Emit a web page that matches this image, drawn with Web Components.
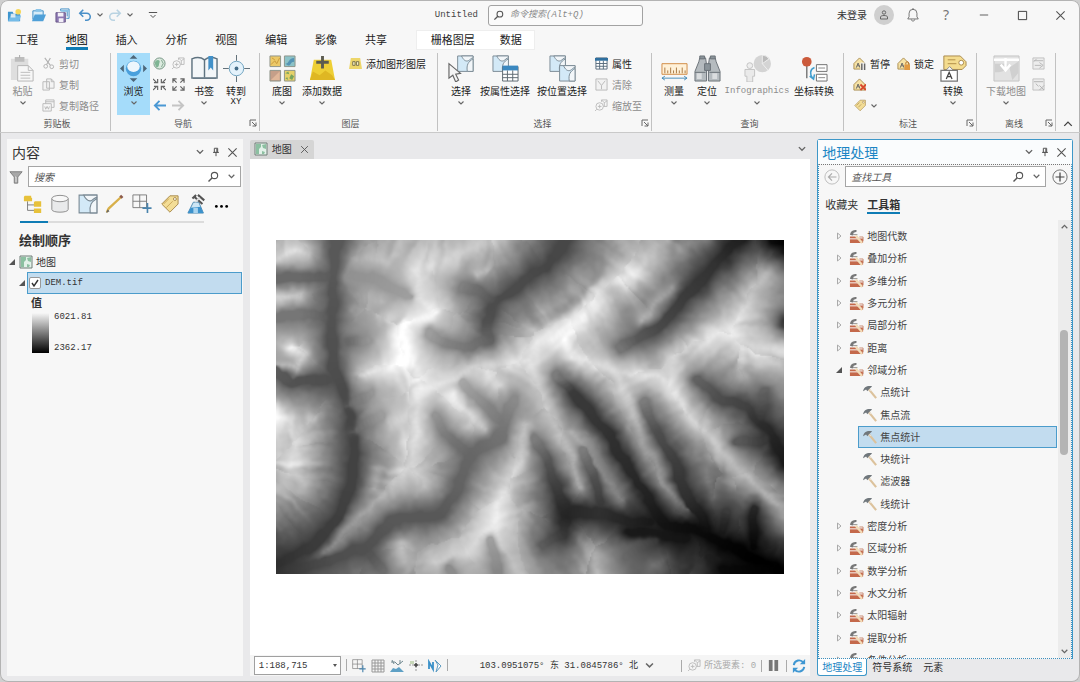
<!DOCTYPE html>
<html lang="zh-CN">
<head>
<meta charset="utf-8">
<title>Untitled</title>
<style>
html,body{margin:0;height:100%}
body{background:#cfcfcf;color:#333;font:10px/14px "Noto Sans CJK SC",sans-serif;--mono:"Liberation Mono","Noto Sans CJK SC",monospace;--blue:#0f7cb5;--line:#b4b4b4;overflow:hidden}
</style>
</head>
<body>
<gis-app></gis-app>
<script>
const RESET = `*{box-sizing:border-box}button,input,select{font:inherit;color:inherit;margin:0}button{background:none;border:0;padding:0;cursor:pointer}button:disabled{cursor:default}a{color:inherit;text-decoration:none}`;
function define(name, css, html, after) {
  customElements.define(name, class extends HTMLElement {
    constructor() { super(); this.attachShadow({mode: 'open'}); }
    connectedCallback() {
      const t = document.createElement('template');
      t.innerHTML = `<style>${RESET}${css}</style>` + (typeof html === 'function' ? html(this) : html);
      this.shadowRoot.replaceChildren(t.content.cloneNode(true));
      if (after) after(this);
    }
  });
}

/* ---------- icons: [viewBox size, markup] ---------- */
const tagShape = '<path d="M3 11 12 2h9v9l-9 9z" fill="#f3dd96" stroke="#a38546"/><circle cx="17.5" cy="5.5" r="1.6" fill="#fff" stroke="#a38546"/>';
const labelTag = '<path d="M1 13V7l6-6 6 6v6z" fill="#f6e2a5" stroke="#a98b4d"/><path d="m3.500 11.500 2-5 2 5M4.500 9.500h2.500" fill="none" stroke="#666"/>';
const carto = '<path d="M1 1h16v16H1z" fill="#d3e9f7" stroke="#7b8a95"/><path d="M5 1c2 4 4 6 7 5 2-1 3-3 5-3V1z" fill="#f2f6f9" stroke="#7b8a95"/><path d="M17 4c-5 3-7 6-6 13h6z" fill="#f2f6f9" stroke="#7b8a95"/>';
const ICONS = {
  project:[16,'<path d="M1 4h5l1 2h7v8H1z" fill="#3d95cf"/><path d="m1 14 3-6h11l-2 6z" fill="#75bce8"/><circle cx="12" cy="4" r="3" fill="#f5d75c"/><path d="M4 6h5v4H4z" fill="#f7f7f7" opacity=".8"/>'],
  open:[16,'<path d="M2 3h11v9H2z" fill="#d8ecf8" stroke="#3b8cc4"/><path d="M5 1h6v3H5z" fill="#8ac4e8"/><path d="m1 14 3-7h12l-3 7z" fill="#4fa0d8"/>'],
  save:[16,'<path d="M1 5h10v10H1z" fill="#8d79b3" stroke="#695587"/><path d="M3 5h6v4H3zM4 11h5v4H4z" fill="#f2eff7"/><path d="M6 3V1h9v10h-3M8 3h5v6" fill="none" stroke="#3b8cc4"/><path d="M6 2h9v2H6z" fill="#8ac4e8"/>'],
  undo:[16,'<path d="M6 2 2 6l4 4M2 6h8a4 4 0 0 1 0 8H8" fill="none" stroke="#4a90c8" stroke-width="1.8"/>'],
  redo:[16,'<path d="m10 2 4 4-4 4m4-4H6a4 4 0 0 0 0 8h2" fill="none" stroke="#b9d3e2" stroke-width="1.8"/>'],
  caret:[8,'<path d="m1.500 2.500 2.500 2.500 2.500-2.500" fill="none" stroke="#666" stroke-width="1.100"/>'],
  menu:[12,'<path d="M1 3h10M3 6l3 3 3-3" fill="none" stroke="#555" stroke-width="1.200"/>'],
  search:[16,'<circle cx="10" cy="6" r="4.200" fill="none" stroke="currentColor" stroke-width="1.500"/><path d="m7 9-5 5" stroke="currentColor" stroke-width="2"/>'],
  user:[12,'<circle cx="6" cy="3.500" r="1.700" fill="none" stroke="#666"/><path d="M2.500 10V8c0-2 7-2 7 0v2z" fill="none" stroke="#666"/>'],
  bell:[16,'<path d="M2 12.500h12L12.500 10V6a4.500 4.500 0 0 0-9 0v4zM6 13c0 2.500 4 2.500 4 0M8 0v2" fill="none" stroke="#666"/>'],
  min:[12,'<path d="M1 6h10" stroke="#444"/>'], max:[12,'<path d="M1.500 1.500h9v9h-9z" fill="none" stroke="#333"/>'],
  close:[12,'<path d="m1.500 1.500 9 9m0-9-9 9" stroke="#555" stroke-width="1.200"/>'],
  pin:[12,'<path d="M4 1.500h4v5H4zM7 2v4M2.500 6.500h7M6 7v4" fill="none" stroke="#555" stroke-width="1.200"/>'],
  paste:[28,'<path d="M2 4h18v22H2z" fill="#dedede"/><path d="M6 2h10v5H6z" fill="#bdbdbd"/><path d="M11 0v3" stroke="#aaa"/><path d="M9 11h11l5 5v11H9z" fill="#f7f7f7" stroke="#b5b5b5"/><path d="M20 11v5h5M12 18h10M12 21h10M12 24h10" fill="none" stroke="#bbb"/>'],
  cut:[14,'<path d="M3 1 9 9M9 1 5 8" stroke="#b0b0b0" stroke-width="1.200"/><circle cx="4" cy="10" r="2" fill="none" stroke="#b0b0b0"/><circle cx="10.500" cy="10.500" r="2" fill="none" stroke="#b0b0b0"/>'],
  copy:[14,'<path d="M1 4h7v9H1zM5 1h5l3 3v7H5z" fill="#f3f3f3" stroke="#b8b8b8"/><path d="M10 1v3h3" fill="none" stroke="#b8b8b8"/>'],
  path:[14,'<path d="M1 5h9v8H1zM4 5V1h9v8h-3M4 3h9" fill="none" stroke="#b8b8b8"/><path d="m3 8 1 3 1.500-3L7 11l1-3" fill="none" stroke="#b8b8b8"/>'],
  browse:[28,'<path d="m14 0 4 4h-8zM14 28l4-4h-8zM0 14l4-4v8zM28 14l-4-4v8z" fill="#4d6678"/><circle cx="14" cy="14" r="8" fill="#4aa0dc"/><ellipse cx="14" cy="12" rx="6.500" ry="5.500" fill="#eef6fc"/>'],
  globe:[14,'<circle cx="7" cy="7" r="6" fill="#dcebe0" stroke="#6d8f7c"/><path d="M3 4c3-2 5 0 4 2s0 4-2 5-4-5-2-7z" fill="#7fb594"/><path d="m9 3 2 4-2 4" fill="none" stroke="#7fa48c"/>'],
  zoomsel:[14,'<circle cx="5" cy="8" r="4" fill="none" stroke="#bbb"/><path d="M3 8h4M5 6v4M2 11l-2 2M7 3V1h6v7H9M7 1l3 3 3-2M10 4v4" fill="none" stroke="#bbb"/>'],
  shrink:[14,'<g fill="none" stroke="#666" stroke-width="1.300"><path d="m0 1 4 4M1 5h4V1M14 1l-4 4M9 1v4h4M0 13l4-4M1 9h4v4M14 13l-4-4M9 13V9h4"/></g>'],
  grow:[14,'<g fill="none" stroke="#666" stroke-width="1.300"><path d="m1 1 4 4M1 5V1h4M13 1 9 5M9 1h4v4M1 13l4-4M1 9v4h4M13 13 9 9M9 13h4V9"/></g>'],
  back:[14,'<path d="M7 2 2 7l5 5M2 7h12" fill="none" stroke="#4a98d4" stroke-width="2"/>'],
  fwd:[14,'<path d="m7 2 5 5-5 5m5-5H0" fill="none" stroke="#c4c4c4" stroke-width="2"/>'],
  book:[28,'<path d="M1 4c5-2 9-2 13 1 4-3 8-3 13-1v20H1z" fill="#f3f6f8" stroke="#5f7380" stroke-width="1.500"/><path d="M14 5v18M2 24h24" stroke="#5f7380" stroke-width="1.500"/><path d="M18 1h5v15l-2.500-3L18 16z" fill="#4291c9"/>'],
  goto:[28,'<circle cx="14" cy="14" r="7.500" fill="#e4f2fb" stroke="#6ea2bf"/><path d="M14 0v6M14 22v6M0 14h6M22 14h6" stroke="#5d6c76"/><circle cx="14" cy="14" r="2" fill="#456d88"/>'],
  basemap:[28,'<g stroke="#8e9489"><path d="M1 1h11v11H1z" fill="#ecc968"/><path d="M16 1h11v11H16z" fill="#8cc3c8"/><path d="M1 16h11v11H1z" fill="#c59f89"/><path d="M16 16h11v11H16z" fill="#e6d169"/></g><path d="m2 10 4-4 2 3 3-6M3 3l3 2" stroke="#c99a3a" fill="none"/><path d="M17 9c4 0 3-6 9-6v4c-4 0-3 4-6 4z" fill="#5594b5"/><path d="M2 26 11 17v9z" fill="#e0b79a"/><path d="m17 19 3-2 1 3zM23 20l3 2-2 4-3-2zM17 24l2-1 1 3z" fill="#79a55c"/>'],
  adddata:[28,'<path d="M5 5h18l4 21H1z" fill="#eecf35"/><path d="m1 26 3-9 7 4 6-5 7 5 3 5z" fill="#dfb723"/><path d="M14 1v13M7.500 7.500h13" stroke="#5c5c50" stroke-width="3"/>'],
  graphics:[14,'<path d="M2 1h10l2 12H0z" fill="#edd66a"/><path d="M4 5h2.500v4H4zM8 5h2.500v4H8z" fill="#f7f0c5" stroke="#776f4c"/>'],
  select:[28,`<g transform="translate(9)">${carto}</g><path d="M1 9v15l4-3 3 7 3-2-3-6 5-1z" fill="#f4f4f4" stroke="#666" stroke-width="1.200"/>`],
  selattr:[28,`<g>${carto}</g><path d="M11 12h16v15H11z" fill="#fff" stroke="#5d6870"/><path d="M11 11h16v5H11z" fill="#3b88c0"/><path d="M11 20h16M11 23.500h16M16 16v11M21.500 16v11" stroke="#5d6870"/>`],
  selloc:[28,`${carto}<g transform="translate(10 10)">${carto}</g>`],
  table:[14,'<path d="M1 1h12v12H1z" fill="#fff" stroke="#55697a"/><path d="M0 1h14v3H0z" fill="#2f6f9f"/><path d="M1 7h12M1 10h12M5 4v9M9 4v9" stroke="#55697a"/>'],
  clear:[14,'<path d="M1 1h12v12H1z" fill="#f2f2f2" stroke="#b8b8b8"/><path d="m3 3 4 5 4-5M7 8v4" fill="none" stroke="#b8b8b8"/>'],
  ruler:[28,'<path d="M1 9h26v11H1z" fill="#fff1d8" stroke="#d08a45"/><path d="M4 19v-6M7 19v-3M10 19v-6M13 19v-3M16 19v-6M19 19v-3M22 19v-6M25 19v-3" stroke="#a97842"/><path d="M1 24h26M4 22l-3 2 3 2M24 22l3 2-3 2" fill="none" stroke="#468bb8"/>'],
  binoc:[28,'<path d="M6 3h6l1 7v17H1V17L5 7zM16 3h6l1 4 4 10v10H15V10z" fill="#b5bbbf" stroke="#6a7178"/><path d="M6 1h5v3H6zM17 1h5v3h-5zM1 18h11M16 18h11M11 9h6v7h-6z" fill="#8a9399" stroke="#6a7178"/><path d="M3 19h5v6H3zM19 19h5v6h-5z" fill="#dadddf"/>'],
  info:[28,'<circle cx="19" cy="9" r="9" fill="#d4d4d4"/><path d="M19 9V0a9 9 0 0 1 7 4zM19 9l6 7" fill="#bbb" stroke="#eee"/><circle cx="6" cy="11" r="3" fill="#eee" stroke="#c3c3c3"/><path d="M1 15h10v7H9v6H3v-6H1z" fill="#eaeaea" stroke="#c3c3c3"/>'],
  coord:[28,'<path d="M6 10v14" stroke="#777" stroke-width="1.500"/><circle cx="6" cy="7" r="5" fill="#cb5a3b"/><path d="M16 10h11v7H16zM16 20h11v7H16z" fill="#fff" stroke="#707070"/><path d="M18 13.500h7M18 23.500h7" stroke="#888"/><path d="M14 13c-5 2-5 7-2 11m-3-2 4 3 1-5" fill="none" stroke="#409dce" stroke-width="1.600"/>'],
  pause:[14,labelTag+'<path d="M8 6h6v8H8z" fill="#f7f7f7"/><path d="M9.500 7v7M12.500 7v7" stroke="#666" stroke-width="1.600"/>'],
  lock:[14,labelTag+'<path d="M8 8h6v6H8z" fill="#e29a42"/><path d="M9.500 8V6.500c0-2 3-2 3 0V8" fill="none" stroke="#b5702a"/>'],
  unplaced:[14,labelTag+'<path d="m8 7 6 6m0-6-6 6" stroke="#d9482d" stroke-width="2"/>'],
  tagsm:[22,tagShape+'<path d="m6 11 5-5M9 14l5-5" stroke="#a38546"/>'],
  convert:[28,'<path d="M4 1h17l6 6v4l-4 4H4z" fill="#f4dc8f" stroke="#a8884c"/><circle cx="22" cy="8" r="2.500" fill="#fff" stroke="#a8884c"/><path d="M8 5h8M8 9h9" stroke="#b18e47"/><path d="m6 16 4-4 4 4" fill="#fff" stroke="#888"/><path d="M1 16h17v11H1z" fill="#fff" stroke="#777" stroke-width="1.300"/><path d="m6.500 25 3-7 3 7m-5-2.500h4" fill="none" stroke="#444" stroke-width="1.300"/>'],
  download:[28,'<path d="M1 1h26v26H1z" fill="#e2e2e2" stroke="#c4c4c4"/><path d="M2 9h13c0 7-5 9-13 9M17 13l9-6v12l-6 7" fill="#d0d0d0"/><path d="M1 5h26M13 3v12m-5-5 5 6 5-6" fill="none" stroke="#fff" stroke-width="2.500"/>'],
  sync:[14,'<path d="M1 1h12v12H1z" fill="#ededed" stroke="#c0c0c0"/><path d="M2 4h10M3 9h7M8 6l4 3-4 3M5 2 2 5" fill="none" stroke="#b5b5b5"/>'],
  remove:[14,'<path d="M1 1h12v12H1z" fill="#ededed" stroke="#c0c0c0"/><path d="M2 4h10M4 6l3 3M8 8l5 5m0-5-5 5" fill="none" stroke="#b0b0b0"/>'],
  launch:[8,'<path d="M1 7V1h6M3 3l4 4M7 3.500V7H3.500" fill="none" stroke="#666"/>'],
  collapse:[8,'<path d="m1 5.500 3-3 3 3" fill="none" stroke="#444" stroke-width="1.100"/>'],
  filter:[16,'<path d="M1 2h14L10 8v7H6V8z" fill="#a8a8a8" stroke="#777"/><path d="M7 8h1v6" stroke="#eee" fill="none"/>'],
  drawing:[22,'<path d="M5 8v10h9M5 12h9" fill="none" stroke="#777"/><path d="M2 2h7v2h1v4H1V3zM13 8h7v6h-8V9zM13 16h7v5h-8v-5z" fill="#e7c13a"/>'],
  cylinder:[22,'<path d="M2 5v12c0 4 18 4 18 0V5" fill="#e9eaeb" stroke="#888"/><ellipse cx="11" cy="5" rx="9" ry="3.500" fill="#f8f8f8" stroke="#888"/>'],
  carto:[18,carto],
  pencil:[22,'<path d="m2 20 2-4L18 3" stroke="#d8b04a" stroke-width="2.500" fill="none"/><path d="m17 4 2-2" stroke="#8c5a4b" stroke-width="3.500"/><path d="m1 21 2-4 2 2z" fill="#666"/>'],
  snap:[22,'<path d="M1 1h15v14H1zM8.500 1v14M1 8h15" fill="none" stroke="#777"/><path d="M17 10v11M11.500 15.500h10" stroke="#4a84ad" stroke-width="1.800"/>'],
  tag:[22,tagShape+'<path d="m5 11 6-6M8 15l7-7" stroke="#c7a051"/>'],
  flask:[22,'<path d="M7 9h6l5 12H1z" fill="#cde6f5" stroke="#4886ad"/><path d="m4 15 11-1 3 7H1z" fill="#3c92cc"/><path d="M7 15h5v6H7z" fill="#a9d3ee"/><path d="m8 3 9 8M12 1l7 6M6 5l4-4" stroke="#555" stroke-width="2.300"/><path d="m9 9 5-5" stroke="#ddd" stroke-width="2"/>'],
  more:[16,'<circle cx="2.500" cy="10" r="1.500"/><circle cx="8" cy="10" r="1.500"/><circle cx="13.500" cy="10" r="1.500"/>'],
  map:[14,'<path d="M1 1h12v12H1z" fill="#e3f1e9" stroke="#6f7d77"/><path d="M2 2h5v3L5 7v5H2zM8 3l4-1v5l-3-1zM8 9l3 1-1 2H8z" fill="#8cc0a1"/>'],
  expanded:[8,'<path d="M7 1v6H1z" fill="#555"/>'],
  collapsed:[8,'<path d="m2.500 1 3.500 3-3.500 3z" fill="none" stroke="#aaa"/>'],
  toolbox:[16,'<path d="M1 6c1-4 3-5 7-5v2L5 4 4 7z" fill="#777"/><path d="M4 6h5" stroke="#8c8c8c"/><path d="M1 8h8l1 2h5v5H1z" fill="#c4694b"/><path d="M1 10.500h9" stroke="#fff"/><path d="m7 7 7 8" stroke="#f2dcb9" stroke-width="2.500"/><path d="M11 8.500h4V13" fill="none" stroke="#c98a72"/>'],
  hammer:[16,'<path d="m6 4 9 11" stroke="#dcc29c" stroke-width="2.400"/><path d="m7 5 2 2" stroke="#eee"/><path d="M0 7c1-4 3-6 8-6h2v1L6.500 5 5 7 3.500 5z" fill="#70777c"/>'],
  circback:[18,'<circle cx="9" cy="9" r="8" fill="none" stroke="#b8b8b8"/><path d="M9 5 5 9l4 4M5 9h9" fill="none" stroke="#aaa" stroke-width="1.300"/>'],
  circplus:[18,'<circle cx="9" cy="9" r="8" fill="none" stroke="#666"/><path d="M9 4v10M4 9h10" stroke="#444" stroke-width="1.400"/>'],
  grid:[14,'<path d="M1 1h12v12H1zM4 1v12M7 1v12M10 1v12M1 4h12M1 7h12M1 10h12" fill="none" stroke="#999"/>'],
  ground:[14,'<path d="M1 3h4l3 3 5-4M2 1l2 4M10 1v4" fill="none" stroke="#708890"/><path d="m0 13 3-4 3 1 3-2 5 5z" fill="#5ea0c5"/>'],
  guide:[14,'<path d="M0 6h14M7 1v12" stroke="#999" stroke-dasharray="2 1"/><path d="M5 6h4M7 4v4" stroke="#444" stroke-width="1.400"/><path d="M1 2h4v3H1z" fill="#c8d8b9"/>'],
  north:[14,'<path d="M1 10V3l4 7V3" fill="none" stroke="#3a91c9" stroke-width="1.800"/><path d="m7 1 3 5-2 7 5-6z" fill="#fff" stroke="#5c9bc1"/>'],
  pausebars:[14,'<path d="M2 1h4v12H2zM8 1h4v12H8z" fill="#777"/>'],
  refresh:[16,'<path d="M2 7c1-6 8-7 11-3M14 9c-1 6-8 7-11 3" fill="none" stroke="#3f97d2" stroke-width="2.200"/><path d="M15 0v6H9zM1 16v-6h6z" fill="#3f97d2"/>']
};
define('ui-icon', ':host{display:inline-flex;flex:none}svg{display:block}', el => {
  const [box, body] = ICONS[el.getAttribute('name')], s = el.getAttribute('size') || box;
  return `<svg width="${s}" height="${s}" viewBox="0 0 ${box} ${box}" aria-hidden="true">${body}</svg>`;
});
const icon = (n, s = '') => `<ui-icon name="${n}" size="${s}"></ui-icon>`;
const ibtn = (n, label, s = '') => `<button aria-label="${label}">${icon(n, s)}</button>`;

/* ---------- title bar ---------- */
define('title-bar', `
:host{display:grid;grid-template-columns:488fr 155fr 437fr;height:30px;align-items:center}
.left,.right,.wins{display:flex;align-items:center}
button{display:flex;align-items:center;justify-content:center}
.left{padding:0 10px 0 7px}.left .files{display:flex;gap:9px;margin-right:8px}.left .hist{display:flex;gap:4px;align-items:center}
.left .qa{margin-left:14px}
h1{font:9px/14px var(--mono);margin:0 0 0 auto;color:#444}
label{display:flex;align-items:center;gap:6px;border:1px solid #a2a2a2;border-radius:3px;height:21px;padding:0 4px;background:#fafafa;color:#555}
input{border:0;background:none;outline:0;min-width:0;flex:1;font:italic 9px/14px var(--mono);padding:0}
input::placeholder{color:#888}
.right{justify-content:flex-end;padding-right:1px;color:#333}
.avatar{width:20px;height:20px;border-radius:50%;background:#cfcfcf;margin:0 12px 0 7px}
.help{font:14px/16px "Noto Sans",sans-serif;color:#777;width:22px;margin:0 8px 0 15px}.wins button{width:38px;height:28px}`,
`<div class="left"><div class="files">${ibtn('project','新建工程',15)}${ibtn('open','打开',15)}${ibtn('save','保存',15)}</div>
<div class="hist">${ibtn('undo','撤消',14)}${ibtn('caret','撤消列表',8)}${ibtn('redo','恢复',14)}${ibtn('caret','恢复列表',8)}</div>
<div class="hist qa">${ibtn('menu','自定义',10)}</div><h1>Untitled</h1></div>
<label>${icon('search',11)}<input aria-label="命令搜索" placeholder="命令搜索(Alt+Q)"></label>
<div class="right"><a href="#signin">未登录</a><button class="avatar" aria-label="账户">${icon('user')}</button>${ibtn('bell','通知',14)}<button class="help">?</button>
<div class="wins">${ibtn('min','最小化',10)}${ibtn('max','最大化',11)}${ibtn('close','关闭',11)}</div></div>`);

/* ---------- ribbon tabs ---------- */
define('ribbon-tabs', `
:host{display:flex;height:20px;padding-left:2px;font-size:11px;line-height:16px;color:#222}
nav{display:grid;grid-template-columns:repeat(8,1fr);width:37%}
nav a{justify-self:center;display:flex;align-items:center;height:20px;border-bottom:3px solid transparent;border-top:1px solid transparent;white-space:nowrap}
nav a[aria-current]{border-bottom-color:var(--blue);color:#000}
.ctx{display:flex;justify-content:space-between;align-items:center;width:119px;margin-left:15px;padding:0 12px 2px 14px;background:#fff;border:1px solid #eee}`,
`<nav>${['工程','地图','插入','分析','视图','编辑','影像','共享'].map((t,i)=>`<a href="#t${i}"${i===1?' aria-current="page"':''}>${t}</a>`).join('')}</nav>
<div class="ctx"><a href="#raster">栅格图层</a><a href="#data">数据</a></div>`);

/* ---------- ribbon pieces ---------- */
define('big-tool', `
:host{display:block;flex:none;height:62px}
button{width:100%;height:100%;display:flex;flex-direction:column;align-items:center;padding-top:2px;white-space:nowrap;color:#222}
:host([active]) button{background:#a5dcfa}button:disabled{color:#8d8d8d}
.l{line-height:14px;margin-top:2px}.mono{font:9px/14px var(--mono)}.sub{font:9px/9px var(--mono)}
ui-icon.c{margin-top:1px}`,
el => { const g = a => el.getAttribute(a); return `<button${g('off')!==null?' disabled':''}>${icon(g('icon'),27)}<span class="l${g('mono')!==null?' mono':''}">${g('label')}</span>${g('sub')?`<span class="sub">${g('sub')}</span>`:''}${g('nocaret')===null?'<ui-icon class="c" name="caret" size="8"></ui-icon>':''}</button>`; });
define('small-tool', `
:host{display:block;height:21px}
button{display:flex;align-items:center;gap:4px;height:100%;white-space:nowrap;color:#222}button:disabled{color:#8d8d8d}`,
el => { const g = a => el.getAttribute(a); return `<button aria-label="${g('label')||g('hint')}"${g('off')!==null?' disabled':''}>${icon(g('icon'),13)}${g('label')?`<span>${g('label')}</span>`:''}${g('drop')!==null?icon('caret',8):''}</button>`; });
define('ribbon-group', `
:host{display:flex;flex-direction:column;min-width:0;border-right:1px solid #c2c2c2;padding-left:6px}
.tools{display:flex;height:64px}
footer{display:grid;grid-template-columns:1fr auto;align-items:center;text-align:center;line-height:14px;font-size:9px;color:#555;padding-right:2px}`,
el => `<div class="tools"><slot></slot></div><footer><span>${el.getAttribute('caption')}</span>${el.hasAttribute('launcher')?ibtn('launch','更多选项',8):''}</footer>`);

const big = (i,l,w,x='') => `<big-tool icon="${i}" label="${l}" style="width:${w}px" ${x}></big-tool>`;
const sm = (i,l,x='') => `<small-tool icon="${i}" label="${l}" ${x}></small-tool>`;
define('app-ribbon', `
:host{display:grid;grid-template-columns:111fr 149fr 178fr 214fr 192fr 133fr 79fr 24fr;padding:3px 0;height:83px;border-bottom:1px solid #c9c9c9}
.col{display:flex;flex-direction:column;padding-left:3px}.row{display:flex;gap:7px}
.mini{display:grid;grid-template-columns:19px 19px;justify-items:center;align-content:start;flex:none}
.fold{align-self:end;justify-self:center;display:flex;padding-bottom:2px}`,
`<ribbon-group caption="剪贴板">${big('paste','粘贴',33,'off')}<div class="col">${sm('cut','剪切','off')}${sm('copy','复制','off')}${sm('path','复制路径','off')}</div></ribbon-group>
<ribbon-group caption="导航" launcher>${big('browse','浏览',33,'active')}<div class="mini">${[['globe','全图'],['zoomsel','缩放至所选'],['shrink','固定比例放大'],['grow','固定比例缩小'],['back','上一视图'],['fwd','下一视图']].map(a=>`<small-tool icon="${a[0]}" hint="${a[1]}"></small-tool>`).join('')}</div>${big('book','书签',32)}${big('goto','转到',32,'sub="XY" nocaret')}</ribbon-group>
<ribbon-group caption="图层">${big('basemap','底图',32)}${big('adddata','添加数据',48)}<div class="col">${sm('graphics','添加图形图层')}</div></ribbon-group>
<ribbon-group caption="选择" launcher>${big('select','选择',34)}${big('selattr','按属性选择',54,'nocaret')}${big('selloc','按位置选择',60,'nocaret')}<div class="col">${sm('table','属性')}${sm('clear','清除','off')}${sm('zoomsel','缩放至','off')}</div></ribbon-group>
<ribbon-group caption="查询">${big('ruler','测量',32)}${big('binoc','定位',34)}${big('info','Infographics',66,'off mono')}${big('coord','坐标转换',48,'nocaret')}</ribbon-group>
<ribbon-group caption="标注" launcher><div class="col"><div class="row">${sm('pause','暂停')}${sm('lock','锁定')}</div><small-tool icon="unplaced" hint="查看未放置的标注"></small-tool><small-tool icon="tagsm" hint="更多标注" drop></small-tool></div>${big('convert','转换',38)}</ribbon-group>
<ribbon-group caption="离线" launcher>${big('download','下载地图',46,'off')}<div class="col"><small-tool icon="sync" hint="同步" off></small-tool><small-tool icon="remove" hint="移除" off></small-tool></div></ribbon-group>
<button class="fold" aria-label="折叠功能区">${icon('collapse',10)}</button>`);

/* ---------- panels ---------- */
define('panel-header', `
:host{display:flex;align-items:center;height:26px;padding:0 5px;font-size:14px;line-height:20px}
h2{font:inherit;margin:0;flex:1}div{display:flex;align-items:center;gap:6px;color:#444}button{display:flex}`,
`<h2><slot></slot></h2><div>${ibtn('caret','菜单',10)}${ibtn('pin','自动隐藏',10)}${ibtn('close','关闭',11)}</div>`);
define('search-box', `
:host{display:block;flex:1;min-width:0}
label{display:flex;align-items:center;gap:8px;height:21px;border:1px solid #a5a5a5;background:#fff;padding:0 4px 0 5px;color:#555}
input{flex:1;min-width:0;border:0;outline:0;background:none;font-style:italic;padding:0}input::placeholder{color:#555}button{display:flex}`,
el => `<label><input aria-label="${el.getAttribute('hint')}" placeholder="${el.getAttribute('hint')}">${icon('search',12)}${ibtn('caret','搜索选项',9)}</label>`);

define('contents-panel', `
:host{display:flex;flex-direction:column;background:#f7f7f7;min-width:0}
button{display:flex}
.find{display:flex;align-items:center;gap:5px;padding:1px 2px 0}
.views{display:flex;justify-content:space-between;padding:0 14px 0 16px;height:34px;align-items:center}
.rule{height:2px;margin:0 39px 0 13px;background:linear-gradient(90deg,var(--blue) 28px,#dcdcdc 28px)}
h3{font-size:13px;line-height:18px;margin:8px 12px 3px;color:#333}
.row{display:flex;align-items:center;gap:3px}.map{padding-left:1px;height:20px}
.layer{padding-left:11px;height:22px;gap:0}
.layer label{flex:1;display:flex;align-items:center;gap:4px;height:22px;margin-right:1px;margin-left:1px;padding-left:1px;border:1px solid #4b9ccb;background:#c2dcef;font:9px/14px var(--mono)}
input{appearance:none;width:12px;height:12px;border:1px solid #999;border-radius:2px;background:#fff url("data:image/svg+xml,%3Csvg xmlns='http://www.w3.org/2000/svg' viewBox='0 0 10 10'%3E%3Cpath d='m2 5 2 3 4-6' fill='none' stroke='%23333' stroke-width='1.400'/%3E%3C/svg%3E")}
h4{font-size:11px;line-height:16px;margin:0 24px 3px}
.legend{display:flex;gap:5px;padding-left:25px;height:40px}
.ramp{width:17px;background:linear-gradient(#f7f7f7,#000)}
.vals{display:flex;flex-direction:column;justify-content:space-between;font:9px/10px var(--mono)}.vals span:first-child{margin-top:-1px}`,
`<panel-header>内容</panel-header><div class="find">${icon('filter',14)}<search-box hint="搜索"></search-box></div>
<div class="views">${[['drawing','按绘制顺序列出'],['cylinder','按数据源列出'],['carto','按选择列出'],['pencil','按编辑列出'],['snap','按捕捉列出'],['tag','按标注列出'],['flask','按图表列出']].map(a=>ibtn(a[0],a[1],20)).join('')}${ibtn('more','更多',15)}</div><div class="rule"></div>
<h3>绘制顺序</h3><div class="row map">${icon('expanded',8)}${icon('map',14)}<span>地图</span></div>
<div class="row layer">${icon('expanded',8)}<label><input type="checkbox" checked>DEM.tif</label></div>
<h4>值</h4><div class="legend"><div class="ramp"></div><div class="vals"><span>6021.81</span><span>2362.17</span></div></div>`);

/* ---------- elevation raster: valleys and ridges as [x, y, grey], in a 1527 x 1005 space ---------- */
const VALLEYS = [
 [185,-30,88,170,85,88,165,235,82,170,385,78,210,485,72,230,605,66,222,745,66,175,845,62,95,925,58,-15,985,45],
 [-5,1000,50,165,960,78,275,925,80,345,845,88,485,825,88,545,745,98,585,645,102,675,585,115,688,525,125,725,465,142],
 [585,645,102,505,575,125,465,515,155],[675,545,118,605,475,145,545,415,172],
 [885,-20,72,815,75,70,725,135,75,650,190,75,635,245,80,635,295,98,585,320,115,505,305,132,445,275,165],
 [650,180,85,595,145,110,545,135,135],
 [1405,-20,28,1315,75,50,1225,175,60,1155,255,72,1085,295,88,1020,332,125],
 [840,405,125,885,455,58,945,525,55,1005,595,48,1065,695,42,1125,795,32,1165,855,18,1275,875,10,1365,925,4,1435,955,0,1535,1010,0],
 [1105,485,125,1145,575,78,1195,665,62,1235,765,48,1275,835,26,1285,875,8],
 [1270,420,98,1335,480,76,1415,495,65,1455,545,45,1495,605,35,1540,685,22],
 [775,595,125,815,665,85,845,745,62,865,815,38,965,820,48,1045,840,38,1135,845,22],
 [915,630,125,955,705,85,975,805,55],[870,825,35,862,880,55,785,925,100],
 [-20,385,95,45,425,82,165,420,78],[-20,115,105,75,110,105,165,105,90],[-20,230,118,75,222,118,160,235,90],
 [225,105,145,295,115,150,415,175,160],[285,945,85,335,1000,115],[1490,-10,12,1540,5,0,1540,50,35],
 [1535,240,55,1535,270,70],[1465,455,100,1455,540,50],[1135,905,60,1040,960,110],[1435,800,40,1435,930,0],[1340,990,10,1510,985,0],
 [1390,600,90,1480,600,50],[1350,820,60,1340,890,15],[520,985,140,540,1010,140],[640,900,160,670,1010,130],[1060,875,25,1240,900,20],[210,310,105,290,300,160],[210,490,100,300,455,160],[225,570,100,330,520,165]];
const RIDGES = [
 [-20,60,215,60,35,235,110,50,195],[-20,172,230,85,170,205],[40,320,250,75,345,220,60,385,200,-20,370,210],
 [-20,525,250,30,545,240,50,590,220,50,675,222,85,740,190],[50,585,220,120,520,190],[50,675,220,20,740,190],
 [690,-20,190,600,10,210,530,50,215,415,90,228,435,175,232,478,220,255,385,250,255,390,310,265,390,355,265,335,385,245,250,410,225],
 [400,340,255,425,385,255,435,445,240,525,415,228,590,385,215,765,358,235,790,312,238,855,280,260,925,225,248,985,140,215,1065,105,240,1125,45,200,1170,-20,165],
 [435,445,240,415,515,228,330,560,200],[415,515,228,418,575,240,405,665,222,445,755,200],[405,665,222,335,755,190,265,815,168,185,895,155,130,945,140],
 [765,358,235,785,445,210,835,555,200,885,645,190,915,755,175],
 [865,295,250,885,345,240,1015,395,226,1065,495,205,1115,635,165,1175,745,155,1245,815,115],
 [1015,395,222,1175,415,232,1225,505,228,1325,615,205,1405,705,195,1540,825,175],
 [1175,415,230,1205,335,215,1365,265,238,1395,315,225,1540,335,240],[1365,265,238,1425,175,212,1485,85,180],[1395,315,225,1405,415,175],
 [745,555,200,735,665,210,685,735,228,655,845,245,585,925,218,465,975,205],[655,845,245,685,935,200,745,1010,195],
 [525,465,248,585,535,222,635,575,200],[635,395,225,675,445,222],[965,1010,200,955,945,185,900,890,120],
 [885,575,185,965,675,155,1045,785,130],[375,915,200,385,980,190],[600,100,195,640,75,195],[240,60,180,330,60,205],[235,200,155,370,240,215],[240,170,155,330,180,195],
 [1300,700,140,1310,790,110],[1130,980,120,1180,950,80],[1450,330,230,1540,410,170],[800,220,170,870,170,160,960,90,150],[1205,20,155,1290,-10,130],[300,740,175,310,680,165],[1100,240,190,1190,130,160]];
define('dem-raster', ':host{display:block;aspect-ratio:509/335}canvas{display:block;width:100%;height:100%}',
'<canvas width="382" height="251" role="img" aria-label="DEM.tif"></canvas>', el => {
  const pts = [];
  let run = 0;
  const add = (lines, valley) => lines.forEach(l => {
    run += 977;
    for (let i = 0; i + 5 < l.length; i += 3) {
      const [x0,y0,g0,x1,y1,g1] = l.slice(i, i + 6), len = Math.hypot(x1-x0, y1-y0), n = Math.max(1, Math.round(len / 14));
      for (let k = 0; k < n; k++) { const t = k / n; pts.push([x0+(x1-x0)*t, y0+(y1-y0)*t, g0+(g1-g0)*t, valley, run+len*t, (x1-x0)/len, (y1-y0)/len]); }
      run += len;
    }
  });
  add(VALLEYS, 1);
  const NV = pts.length;
  add(RIDGES, 0);
  const hash = (a, b) => { const v = Math.sin(a * 127.1 + b * 311.7) * 43758.5453; return v - Math.floor(v); };
  const noise = (x, y) => { const a = Math.floor(x), b = Math.floor(y); let u = x - a, v = y - b; u *= u*(3-2*u); v *= v*(3-2*v);
    return (hash(a,b)*(1-u)+hash(a+1,b)*u)*(1-v)+(hash(a,b+1)*(1-u)+hash(a+1,b+1)*u)*v - .5; };
  const c = el.shadowRoot.querySelector('canvas'), W = c.width, H = c.height, ctx = c.getContext('2d'), img = ctx.createImageData(W, H);
  const N = pts.length, F = new Float64Array(N * 3); pts.forEach((p, i) => F.set([p[0], p[1], p[2]], i * 3));
  for (let j = 0; j < H; j++) for (let i = 0; i < W; i++) {
    const px = i / W * 1527, py = j / H * 1005;
    const x = px + noise(px/38, py/38+50)*14 + noise(px/16+9, py/16)*6, y = py + noise(px/38+80, py/38)*14 + noise(px/16, py/16+30)*6;
    let vw = 0, vg = 0, rw = 0, rg = 0, best = 1e9, bi = 0, k = 0, o = 0;
    for (; k < NV; k++, o += 3) {
      const dx = x - F[o], dy = y - F[o+1], d = dx*dx + dy*dy, q = d + 60, w = 1 / (q * q);
      vw += w; vg += w * F[o+2];
      if (d < best) { best = d; bi = k; }
    }
    for (; k < N; k++, o += 3) {
      const dx = x - F[o], dy = y - F[o+1], q = dx*dx + dy*dy + 60, w = 1 / (q * q);
      rw += w; rg += w * F[o+2];
    }
    /* soft distances to the valley and ridge nets; the valley floor is flat for 14 units */
    const dv = Math.max(0, Math.cbrt(1 / (vw * 8.9)) - 14), dr = Math.max(0, Math.cbrt(1 / (rw * 8.9)) - 4);
    const t = dv / (dv + dr + 1), base = vg/vw + (rg/rw - vg/vw) * Math.pow(t, .95);
    const p = pts[bi], d = Math.sqrt(best), s = p[4] + (x-p[0])*p[5] + (y-p[1])*p[6];
    const amp = Math.min(1, Math.max(0, (d - 20) / 70));
    const v = Math.max(0, Math.min(255, base + amp * (noise(s/17, d/140)*22 + noise(s/36+7, d/150)*22 + noise(px/14, py/14)*7)));
    const at = (j*W+i)*4;
    img.data[at] = img.data[at+1] = img.data[at+2] = v; img.data[at+3] = 255;
  }
  ctx.putImageData(img, 0, 0);
});

define('map-view', `
:host{display:flex;flex-direction:column;min-width:0}
.tabs{display:flex;justify-content:space-between;align-items:center;height:20px;padding-right:3px;flex:none}
.tab{display:flex;align-items:center;gap:4px;height:19px;padding:0 5px 0 4px;background:#d5d5d5;border-radius:2px 2px 0 0}.tab span{margin-right:4px}
button{display:flex}
.canvas{flex:1;min-height:0;background:#fff;display:flex;align-items:center;justify-content:center;padding:0 26px}dem-raster{width:100%}
.status{display:flex;align-items:center;height:21px;background:#f5f5f5;padding:0 4px;flex:none;font:9px/14px var(--mono)}
select{width:87px;height:19px;border:1px solid #a0a0a0;border-radius:0;background:#fff;padding:0 4px;appearance:none;grid-area:1/1}
.scale{display:grid;align-items:center}.scale::after{content:"";grid-area:1/1;justify-self:end;margin-right:4px;border:2px solid transparent;border-top:3px solid #555;border-bottom:0;pointer-events:none}
i{width:1px;height:12px;background:#aaa}.tools{display:flex;gap:5px;margin:0 6px 0 5px}
.xy{margin:0 6px 0 auto;white-space:pre}.xy+button{margin-right:auto}.sel{display:flex;gap:3px;align-items:center;color:#aaa;margin:0 5px 0 6px;white-space:pre}
.sel+i+button{margin:0 6px 0 5px}.ref{margin-left:5px}`,
`<div class="tabs"><div class="tab">${icon('map',14)}<span>地图</span>${ibtn('close','关闭视图',9)}</div>${ibtn('caret','视图列表',10)}</div>
<div class="canvas"><dem-raster></dem-raster></div>
<div class="status"><div class="scale"><select aria-label="比例尺"><option>1:188,715</option></select></div><div class="tools"><i></i>${[['snap','捕捉'],['grid','格网'],['ground','地面'],['guide','参考线'],['north','指北']].map(a=>ibtn(a[0],a[1],14)).join('')}<i></i></div>
<span class="xy">103.0951075° 东 31.0845786° 北</span>${ibtn('caret','坐标格式',11)}<i></i><span class="sel">${icon('zoomsel',13)}<span>所选要素: 0</span></span><i></i>${ibtn('pausebars','暂停绘制',13)}<i></i><button class="ref" aria-label="刷新">${icon('refresh',14)}</button></div>`);

/* ---------- geoprocessing ---------- */
define('tool-row', `
:host{display:flex;align-items:center;padding-left:16px;gap:6px;min-height:0;color:#444}
span{white-space:nowrap}div{display:flex;align-items:center;gap:3px}
:host([leaf]){margin-left:39px;padding-left:4px;border:1px solid transparent;color:#444}
:host([selected]){background:#c2dcef;border-color:#4b9ccb}`,
el => el.hasAttribute('leaf') ? `<div>${icon('hammer',14)}<span><slot></slot></span></div>` : `${icon(el.hasAttribute('open')?'expanded':'collapsed',8)}<div>${icon('toolbox',15)}<span><slot></slot></span></div>`);
const folders = a => a.map(t => `<tool-row role="treeitem">${t}</tool-row>`).join('');
define('geoprocessing-panel', `
:host{display:flex;flex-direction:column;min-width:0}
button{display:flex}
.frame{flex:1;min-height:0;display:flex;flex-direction:column;border:1px solid #3d97c8;border-bottom:0;border-radius:3px 3px 0 0;background:#f7f7f7}
panel-header{color:#1c86c4;background:#fafcfd;height:24px;padding-left:4px;flex:none}
.inner{flex:1;min-height:0;display:flex;flex-direction:column;border:1px dotted #3d8fbd;border-top-color:#777}
.find{display:flex;align-items:center;gap:5px;padding:1px 3px 0 5px}
.find search-box{margin-right:1px}
nav{display:flex;gap:9px;padding:9px 0 6px 6px;font-size:11px;line-height:16px}nav a{border-bottom:2px solid transparent;height:18px}
nav a[aria-current]{font-weight:bold;border-color:var(--blue);color:#333}
.body{flex:1;min-height:0;display:flex;overflow:hidden;gap:1px}
.tree{flex:1;height:calc(100% + 8px);margin-top:5px;display:grid;grid-template-rows:repeat(20,1fr)}
.bar{width:13px;background:#ececec;display:flex;flex-direction:column;align-items:center;justify-content:space-between;padding:2px 0;color:#888}
.track{flex:1;display:grid;grid-template-rows:98fr 124fr 190fr}.thumb{grid-row:2;width:8px;border-radius:4px;background:#b4b4b4}
.up{transform:rotate(180deg)}
.dock{display:flex;height:17px;flex:none;line-height:15px}.dock a{padding:0 6px 0 5px}
.dock a[aria-current]{padding:0 4px;color:#1c86c4;background:#fff;border:1px solid #3d97c8;border-top:0;border-radius:0 0 3px 3px}`,
`<div class="frame"><panel-header>地理处理</panel-header><div class="inner">
<div class="find">${ibtn('circback','后退',16)}<search-box hint="查找工具"></search-box>${ibtn('circplus','添加',16)}</div>
<nav><a href="#fav">收藏夹</a><a href="#box" aria-current="page">工具箱</a></nav>
<div class="body"><div class="tree" role="tree">${folders(['地图代数','叠加分析','多维分析','多元分析','局部分析','距离'])}<tool-row role="treeitem" open>邻域分析</tool-row>
${['点统计','焦点流','焦点统计','块统计','滤波器','线统计'].map((t,i)=>`<tool-row role="treeitem" leaf${i===2?' selected':''}>${t}</tool-row>`).join('')}${folders(['密度分析','区域分析','数学分析','水文分析','太阳辐射','提取分析','条件分析'])}</div>
<div class="bar"><ui-icon class="up" name="caret" size="9"></ui-icon><div class="track"><div class="thumb"></div></div>${icon('caret',9)}</div></div>
</div></div><div class="dock"><a href="#gp" aria-current="page">地理处理</a><a href="#sym">符号系统</a><a href="#el">元素</a></div>`);

define('gis-app', `
:host{display:flex;flex-direction:column;height:100vh;background:#f7f7f7;border-radius:8px;overflow:hidden;box-shadow:inset 0 0 0 1px #b3b3b3}
title-bar,ribbon-tabs,app-ribbon{flex:none}
main{flex:1;min-height:0;display:grid;grid-template-columns:236fr 561fr 256fr;gap:7px;padding:6px 6px 5px;background:#e9e9eb;border:1px solid #b3b3b3;border-top:0;border-radius:0 0 8px 8px}
main>*{min-height:0}`,
`<title-bar></title-bar><ribbon-tabs></ribbon-tabs><app-ribbon></app-ribbon><main><contents-panel></contents-panel><map-view></map-view><geoprocessing-panel></geoprocessing-panel></main>`);
</script>
</body>
</html>
